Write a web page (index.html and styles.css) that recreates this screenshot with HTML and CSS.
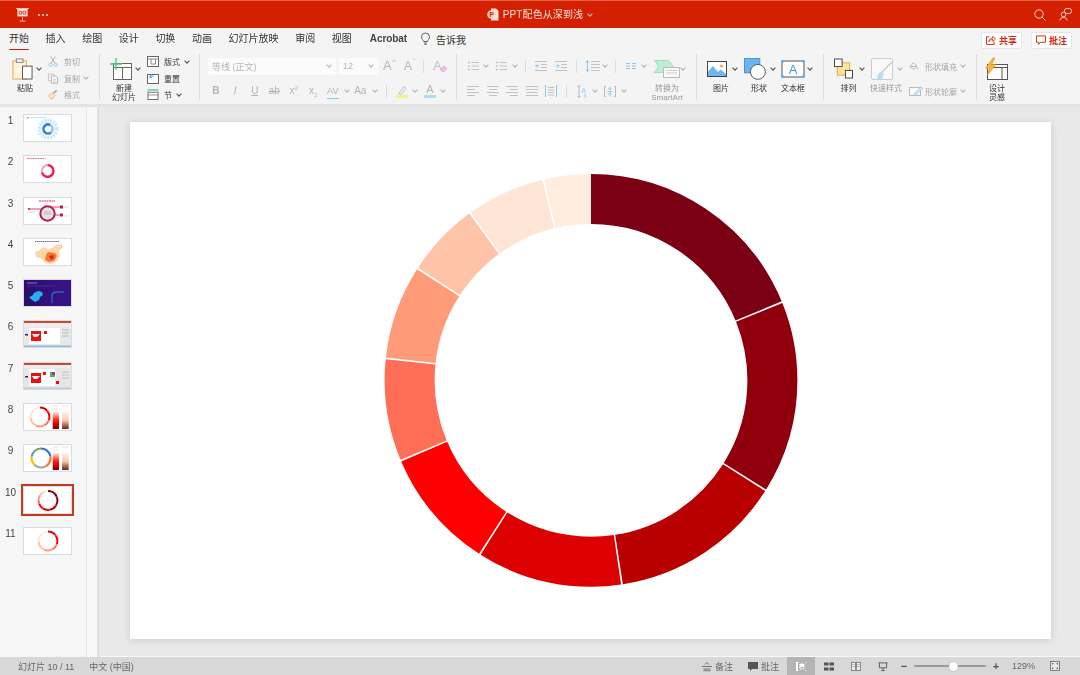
FILE: index.html
```html
<!DOCTYPE html>
<html lang="zh-CN">
<head>
<meta charset="utf-8">
<title>PPT配色从深到浅</title>
<link rel="stylesheet" href="styles.css">
</head>
<body>
<svg class="defs" aria-hidden="true">
  <defs>
    <symbol id="chev" viewBox="0 0 6 4"><path d="M.6.6 3 3.2 5.4.6" fill="none" stroke="currentColor" stroke-width="1.1"/></symbol>
    <g id="ring">
      <circle class="seg s1" r="181.4" pathLength="360" stroke-dasharray="67.5 360" stroke-dashoffset="0" transform="rotate(-90)"/>
      <circle class="seg s2" r="181.4" pathLength="360" stroke-dasharray="53.95 360" stroke-dashoffset="-68" transform="rotate(-90)"/>
      <circle class="seg s3" r="181.4" pathLength="360" stroke-dasharray="48.65 360" stroke-dashoffset="-122.45" transform="rotate(-90)"/>
      <circle class="seg s4" r="181.4" pathLength="360" stroke-dasharray="40.75 360" stroke-dashoffset="-171.6" transform="rotate(-90)"/>
      <circle class="seg s5" r="181.4" pathLength="360" stroke-dasharray="34 360" stroke-dashoffset="-212.85" transform="rotate(-90)"/>
      <circle class="seg s6" r="181.4" pathLength="360" stroke-dasharray="28.5 360" stroke-dashoffset="-247.35" transform="rotate(-90)"/>
      <circle class="seg s7" r="181.4" pathLength="360" stroke-dasharray="26.2 360" stroke-dashoffset="-276.35" transform="rotate(-90)"/>
      <circle class="seg s8" r="181.4" pathLength="360" stroke-dasharray="20.8 360" stroke-dashoffset="-303.05" transform="rotate(-90)"/>
      <circle class="seg s9" r="181.4" pathLength="360" stroke-dasharray="22 360" stroke-dashoffset="-324.35" transform="rotate(-90)"/>
      <circle class="seg s10" r="181.4" pathLength="360" stroke-dasharray="13.15 360" stroke-dashoffset="-346.85" transform="rotate(-90)"/>
    </g>
    <g id="ringlight">
      <circle class="seg s4" r="181.4" pathLength="360" stroke-dasharray="50 360" stroke-dashoffset="0" transform="rotate(-90)"/>
      <circle class="seg s5" r="181.4" pathLength="360" stroke-dasharray="60 360" stroke-dashoffset="-51" transform="rotate(-90)"/>
      <circle class="seg s6" r="181.4" pathLength="360" stroke-dasharray="40 360" stroke-dashoffset="-112" transform="rotate(-90)"/>
      <circle class="seg s7" r="181.4" pathLength="360" stroke-dasharray="50 360" stroke-dashoffset="-153" transform="rotate(-90)"/>
      <circle class="seg s8" r="181.4" pathLength="360" stroke-dasharray="60 360" stroke-dashoffset="-204" transform="rotate(-90)"/>
      <circle class="seg s9" r="181.4" pathLength="360" stroke-dasharray="50 360" stroke-dashoffset="-265" transform="rotate(-90)"/>
      <circle class="seg s10" r="181.4" pathLength="360" stroke-dasharray="44 360" stroke-dashoffset="-316" transform="rotate(-90)"/>
    </g>
    <linearGradient id="barA" x1="0" y1="0" x2="0" y2="1"><stop offset="0" stop-color="#ffe9dd"/><stop offset=".45" stop-color="#ff2a1a"/><stop offset=".7" stop-color="#d80000"/><stop offset="1" stop-color="#70000f"/></linearGradient>
    <linearGradient id="barB" x1="0" y1="0" x2="0" y2="1"><stop offset="0" stop-color="#fff3ea"/><stop offset=".5" stop-color="#f8c8a8"/><stop offset=".8" stop-color="#a8604a"/><stop offset="1" stop-color="#5e2a1e"/></linearGradient>
    <symbol id="list" viewBox="0 0 12 12"><path d="M1 2.5h1.6M1 6h1.6M1 9.500h1.600" stroke="#8dc6ec" stroke-width="1.600"/><path d="M4.500 2.500H12M4.500 6H12M4.500 9.500H12" stroke="#c2c2c2"/></symbol>
    <symbol id="indl" viewBox="0 0 12 12"><path d="M0 1.500h12M6 4.500h6M6 7.500h6M0 10.500h12" stroke="#c2c2c2"/><path d="M4.500 6H.8M2.500 4.300.8 6l1.700 1.700" fill="none" stroke="#8dc6ec"/></symbol>
    <symbol id="indr" viewBox="0 0 12 12"><path d="M0 1.500h12M6 4.500h6M6 7.500h6M0 10.500h12" stroke="#c2c2c2"/><path d="M.5 6h3.700M2.500 4.300 4.200 6 2.500 7.700" fill="none" stroke="#8dc6ec"/></symbol>
    <symbol id="al" viewBox="0 0 12 10"><path d="M0 .5h12M0 3.500h8M0 6.500h12M0 9.500h8" stroke="#c2c2c2"/></symbol>
    <symbol id="ac" viewBox="0 0 12 10"><path d="M0 .5h12M2 3.500h8M0 6.500h12M2 9.500h8" stroke="#c2c2c2"/></symbol>
    <symbol id="ar" viewBox="0 0 12 10"><path d="M0 .5h12M4 3.500h8M0 6.500h12M4 9.500h8" stroke="#c2c2c2"/></symbol>
    <symbol id="aj" viewBox="0 0 12 10"><path d="M0 .5h12M0 3.500h12M0 6.500h12M0 9.500h12" stroke="#c2c2c2"/></symbol>
  </defs>
</svg>

<div class="app">
  <header class="titlebar soft">
    <div class="tb-left">
      <svg class="i-logo" viewBox="0 0 14 15"><path d="M0 .5h14M7 10v3.500M4 14h6" stroke="#f6c9bd" fill="none"/><rect x="1.500" y="1" width="11" height="8" fill="#fbe3dc"/><path d="M3.500 3.500h2.500v3h-2.500zM7.500 3.500h3v3h-3z" fill="none" stroke="#d22000" stroke-width=".8"/></svg>
      <div class="dots"><i></i><i></i><i></i></div>
    </div>
    <div class="tb-title">
      <svg class="i-file" viewBox="0 0 12 13"><path d="M4 .5h5l2.500 2.500v9a.6.6 0 0 1-.6.6H4z" fill="#fbe3dc"/><circle cx="4.500" cy="6.500" r="4.300" fill="#f8d2c6"/><text x="2.300" y="9.200" class="file-p">P</text></svg>
      <span class="doc-name">PPT配色从深到浅</span>
      <svg class="cv title-cv"><use href="#chev"/></svg>
    </div>
    <div class="tb-right">
      <svg class="i-search" viewBox="0 0 12 12"><circle cx="5" cy="5" r="4.200" fill="none" stroke="#f8d4ca"/><path d="M8 8l3.500 3.500" stroke="#f8d4ca"/></svg>
      <svg class="i-person" viewBox="0 0 13 13"><circle cx="4.500" cy="6.500" r="2.300" fill="none" stroke="#f8d4ca"/><path d="M1 12.500c0-4 7-4 7 0" fill="none" stroke="#f8d4ca"/><rect x="5.500" y=".5" width="7" height="5" rx="2.200" fill="#d22000" stroke="#f8d4ca"/></svg>
    </div>
  </header>

  <nav class="tabs soft">
    <span class="tab active">开始</span>
    <span class="tab">插入</span>
    <span class="tab">绘图</span>
    <span class="tab">设计</span>
    <span class="tab">切换</span>
    <span class="tab">动画</span>
    <span class="tab">幻灯片放映</span>
    <span class="tab">审阅</span>
    <span class="tab">视图</span>
    <span class="tab tab-en">Acrobat</span>
    <span class="tell">
      <svg class="i-bulb" viewBox="0 0 9 12"><path d="M2.600 8.500C2.300 7 .5 6.200.5 4a4 4 0 0 1 8 0c0 2.200-1.800 3-2.100 4.500zM3 10h3M3.500 11.500h2" fill="none" stroke="#555" stroke-width=".9"/></svg>
      告诉我
    </span>
    <div class="tab-actions">
      <span class="act-btn">
        <svg class="i-act" viewBox="0 0 11 11"><path d="M3.500 2H.5v8.500h8.500V7.500" fill="none" stroke="#d22000"/><path d="M3 7.500C3.300 5 5 3.500 7.500 3.500V1.500L10.500 4.500 7.500 7V5C5.500 5 4 6 3 7.500z" fill="none" stroke="#d22000" stroke-width=".9"/></svg>
        共享
      </span>
      <span class="act-btn">
        <svg class="i-act" viewBox="0 0 11 11"><path d="M.5 1h10v7H5l-2 2.300V8H.5z" fill="none" stroke="#d22000"/></svg>
        批注
      </span>
    </div>
  </nav>

  <section class="ribbon soft">
    <div class="group g1">
      <div class="big w26">
        <div class="big-top">
          <svg class="i-paste" viewBox="0 0 22 23"><rect x="1" y="3" width="14" height="19" fill="#fff4df" stroke="#f0a23c"/><rect x="4.500" y="1" width="7" height="3.500" fill="#fff" stroke="#777"/><rect x="11" y="8.500" width="10" height="13.500" fill="#fff" stroke="#555"/></svg>
          <svg class="cv dark ml3"><use href="#chev"/></svg>
        </div>
        <div class="lbl">粘贴</div>
      </div>
      <div class="stack ml10">
        <div class="srow off">
          <span class="si"><svg class="i-s" viewBox="0 0 10 12"><path d="M2.500.5 7 8M7.500.5 3 8" stroke="#aaa" fill="none"/><circle cx="2.300" cy="9.500" r="1.700" fill="none" stroke="#8dc6ec"/><circle cx="7.700" cy="9.500" r="1.700" fill="none" stroke="#8dc6ec"/></svg></span>剪切
        </div>
        <div class="srow off">
          <span class="si"><svg class="i-s" viewBox="0 0 12 12"><path d="M3.500 8.500H.5V.5h5.500l1.500 2" fill="none" stroke="#bbb"/><path d="M4 3h5.500l2 2v6.500H4z" fill="#f8f8f8" stroke="#aaa"/><path d="M6 7h3.500M6 9h3.500" stroke="#bbb" stroke-width=".8"/></svg></span>复制
          <svg class="cv ml3"><use href="#chev"/></svg>
        </div>
        <div class="srow off">
          <span class="si"><svg class="i-s" viewBox="0 0 12 12"><path d="M.5 7 5 3.500 8.500 7 5 11.500C3 11.500 1 9.500.5 7z" fill="#fbe4c4" stroke="#e6b98a"/><path d="M6.500 4.500 10.500 1" stroke="#aaa" stroke-width="2"/></svg></span>格式
        </div>
      </div>
    </div>

    <div class="group g2">
      <div class="big w28">
        <div class="big-top">
          <svg class="i-new" viewBox="0 0 22 22"><rect x="3.500" y="5.500" width="18" height="16" fill="#fff" stroke="#666"/><path d="M3.500 9.500h18M12.500 9.500v12" stroke="#666"/><path d="M6 0v12M0 6h12" stroke="#3ed07c" stroke-width="1.300"/></svg>
          <svg class="cv dark ml3"><use href="#chev"/></svg>
        </div>
        <div class="lbl">新建<br>幻灯片</div>
      </div>
      <div class="stack ml9">
        <div class="srow on">
          <span class="si si17"><svg class="i-s12" viewBox="0 0 12 11"><rect x=".5" y=".5" width="11" height="10" fill="#fff" stroke="#666"/><path d="M.5 3h11M4 3v5h4.500V3" fill="none" stroke="#888"/></svg></span>版式
          <svg class="cv dark ml4"><use href="#chev"/></svg>
        </div>
        <div class="srow on">
          <span class="si si17"><svg class="i-s12" viewBox="0 0 12 11"><rect x=".5" y="1.500" width="11" height="9" fill="#fff" stroke="#666"/><path d="M3 5.500V3h3.500M3 3l1.700-2M3 3l1.700 2" fill="none" stroke="#3d9be9"/></svg></span>重置
        </div>
        <div class="srow on">
          <span class="si si17"><svg class="i-s12" viewBox="0 0 12 12"><rect x=".5" y="3.500" width="11" height="8" fill="#fff" stroke="#666"/><path d="M0 1h12" stroke="#4fd08a" stroke-width="1.500"/><path d="M.5 6.500h11" stroke="#888"/></svg></span>节
          <svg class="cv dark ml4"><use href="#chev"/></svg>
        </div>
      </div>
    </div>

    <div class="group g3">
      <div class="col">
        <div class="row first pl8">
          <div class="select w128"><span>等线 (正文)</span><svg class="cv"><use href="#chev"/></svg></div>
          <div class="select w39 ml3"><span>12</span><svg class="cv"><use href="#chev"/></svg></div>
          <span class="txt-ic sz14 ml5">A<sup>^</sup></span>
          <span class="txt-ic sz12 ml7">A<sup>ˇ</sup></span>
          <i class="sep ml7"></i>
          <span class="txt-ic sz14 ml9 clear">A<svg class="i-eraser" viewBox="0 0 8 7"><path d="M.5 4.500 4 1l3 2.500L3.800 6.500H2z" fill="#f3bfe2" stroke="#e79ad0" stroke-width=".7"/></svg></span>
        </div>
        <div class="row pl6">
          <span class="fbtn b">B</span>
          <span class="fbtn it">I</span>
          <span class="fbtn un">U</span>
          <span class="fbtn st">ab</span>
          <span class="fbtn">x<sup class="blue-s">2</sup></span>
          <span class="fbtn">x<sub class="blue-s">2</sub></span>
          <span class="fbtn av">AV<i class="av-line"></i></span>
          <svg class="cv ml1"><use href="#chev"/></svg>
          <span class="fbtn ml1">Aa</span>
          <svg class="cv ml2"><use href="#chev"/></svg>
          <i class="sep ml8"></i>
          <svg class="i-high ml9" viewBox="0 0 12 13"><path d="M3 8 8 1.500l2 1.500-4.500 6H3z" fill="none" stroke="#c2c2c2"/><rect y="10" width="12" height="3" fill="#f8f08c"/></svg>
          <svg class="cv ml4"><use href="#chev"/></svg>
          <span class="fcolor ml6">A</span>
          <svg class="cv ml4"><use href="#chev"/></svg>
        </div>
      </div>
    </div>

    <div class="group g4">
      <div class="col">
        <div class="row first pl10">
          <svg class="i12"><use href="#list"/></svg>
          <svg class="cv ml4"><use href="#chev"/></svg>
          <svg class="i12 ml6"><use href="#list"/></svg>
          <svg class="cv ml5"><use href="#chev"/></svg>
          <i class="sep ml7"></i>
          <svg class="i12 ml9"><use href="#indl"/></svg>
          <svg class="i12 ml8"><use href="#indr"/></svg>
          <i class="sep ml9"></i>
          <svg class="i-spacing ml8" viewBox="0 0 15 12"><path d="M2.500.5v11M.8 2.500 2.500.5l1.700 2M.8 9.500l1.700 2 1.700-2" fill="none" stroke="#8dc6ec"/><path d="M6 1.500h9M6 4.500h9M6 7.500h9M6 10.500h9" stroke="#c2c2c2"/></svg>
          <svg class="cv ml2"><use href="#chev"/></svg>
          <i class="sep ml7"></i>
          <svg class="i-cols ml10" viewBox="0 0 10 6"><path d="M0 .5h4M6 .5h4M0 3h4M6 3h4M0 5.500h4M6 5.500h4" stroke="#8dc6ec"/></svg>
          <svg class="cv ml5"><use href="#chev"/></svg>
        </div>
        <div class="row pl10">
          <svg class="i12h"><use href="#al"/></svg>
          <svg class="i12h ml8"><use href="#ac"/></svg>
          <svg class="i12h ml7"><use href="#ar"/></svg>
          <svg class="i12h ml8"><use href="#aj"/></svg>
          <svg class="i-dist ml7" viewBox="0 0 12 12"><path d="M.5 0v12M11.500 0v12" stroke="#8dc6ec"/><path d="M3 2.500h6M3 5h6M3 7.500h6M3 10h6" stroke="#c2c2c2"/></svg>
          <i class="sep ml9"></i>
          <svg class="i-vtxt ml10" viewBox="0 0 12 13"><path d="M2 .5v12M.5 2 2 .5 3.500 2M.5 11 2 12.500 3.500 11" fill="none" stroke="#bbb"/><text x="4.500" y="7.500" class="vt">A</text><path d="M8 8.500v4" stroke="#8dc6ec"/></svg>
          <svg class="cv ml3"><use href="#chev"/></svg>
          <svg class="i-valign ml6" viewBox="0 0 12 11"><path d="M2 .5H.5v10H2M10 .5h1.500v10H10" fill="none" stroke="#bbb"/><path d="M6 .5v3M6 7.500v3M4.500 2.500 6 4l1.500-1.500M4.500 8.500 6 7l1.500 1.500" fill="none" stroke="#8dc6ec"/><path d="M3.500 5.500h5" stroke="#bbb"/></svg>
          <svg class="cv ml5"><use href="#chev"/></svg>
        </div>
      </div>
      <div class="big w30 off-lbl ml5">
        <div class="big-top pl2">
          <svg class="i-smart" viewBox="0 0 26 18"><path d="M.5.5h14l5 6-5 6H.5l4-6z" fill="#bdeed3" stroke="#9fdfc0"/><rect x="9.500" y="7.500" width="16" height="10" fill="#fafafa" stroke="#bbb"/><path d="M12 10.500h11M12 13h11" stroke="#ccc"/></svg>
          <svg class="cv"><use href="#chev"/></svg>
        </div>
        <div class="lbl">转换为<br>SmartArt</div>
      </div>
    </div>

    <div class="group g5">
      <div class="big w28">
        <div class="big-top">
          <svg class="i-pic" viewBox="0 0 20 16"><rect x=".5" y=".5" width="19" height="15" fill="#fff" stroke="#444"/><path d="M1 15V10.500L6 5l5 6 2.500-2.500L19 13v2z" fill="#6db6f0"/><circle cx="14.500" cy="5" r="1.500" fill="#f5a25b"/></svg>
          <svg class="cv dark ml5"><use href="#chev"/></svg>
        </div>
        <div class="lbl">图片</div>
      </div>
      <div class="big w28 ml10">
        <div class="big-top">
          <svg class="i-shape" viewBox="0 0 23 23"><rect x=".5" y=".5" width="16" height="15" fill="#6db3f2" stroke="#4b90d6"/><circle cx="14.500" cy="14.500" r="7.800" fill="#fff" stroke="#555"/></svg>
          <svg class="cv dark ml4"><use href="#chev"/></svg>
        </div>
        <div class="lbl">形状</div>
      </div>
      <div class="big w24 ml8">
        <div class="big-top">
          <svg class="i-box" viewBox="0 0 24 18"><rect x="1" y="1" width="22" height="16" fill="#fff" stroke="#555"/><g fill="#5aaef0"><circle cx="1.500" cy="1.500" r="1.400"/><circle cx="22.500" cy="1.500" r="1.400"/><circle cx="1.500" cy="16.500" r="1.400"/><circle cx="22.500" cy="16.500" r="1.400"/></g><text x="12" y="14" class="box-a">A</text></svg>
          <svg class="cv dark ml2"><use href="#chev"/></svg>
        </div>
        <div class="lbl">文本框</div>
      </div>
    </div>

    <div class="group g6">
      <div class="big w29">
        <div class="big-top">
          <svg class="i-arr" viewBox="0 0 20 21"><rect x="3.500" y="4.500" width="13" height="13" fill="#fee39b" stroke="#f0a23c"/><rect x=".5" y=".5" width="8" height="8" fill="#fff" stroke="#444"/><rect x="12" y="12.500" width="7.500" height="8" fill="#fff" stroke="#444"/></svg>
          <svg class="cv dark ml6"><use href="#chev"/></svg>
        </div>
        <div class="lbl">排列</div>
      </div>
      <div class="big w46 off-lbl">
        <div class="big-top pl8">
          <svg class="i-quick" viewBox="0 0 22 22"><rect x=".5" y=".5" width="21" height="21" rx="1.500" fill="#f9f9f9" stroke="#ccc"/><path d="M21 4 11 14" stroke="#ccc" stroke-width="1.500"/><path d="M6 21c0-5 3-8 6-7 1 1 .5 4-1 7z" fill="#bcdcf2"/></svg>
          <svg class="cv ml4"><use href="#chev"/></svg>
        </div>
        <div class="lbl">快速样式</div>
      </div>
      <div class="col">
        <div class="row first shape-row off">
          <span class="si"><svg class="i-s" viewBox="0 0 12 11"><path d="M1 5.500 5.500 1l4 4-3.500 4z" fill="#fafafa" stroke="#aaa"/><path d="M2 5.500h7" stroke="#aaa"/><path d="M10.500 7v2" stroke="#8dc6ec" stroke-width="1.300"/></svg></span>形状填充
          <svg class="cv ml3"><use href="#chev"/></svg>
        </div>
        <div class="row shape-row off">
          <span class="si shift"><svg class="i-s15" viewBox="0 0 14 10"><rect x=".5" y="1.500" width="11" height="8" fill="#fafafa" stroke="#bbb"/><path d="M5 8 12 1l1.500 1.500-7 6.500z" fill="#d5eaf8" stroke="#8dc6ec" stroke-width=".8"/></svg></span>形状轮廓
          <svg class="cv ml3"><use href="#chev"/></svg>
        </div>
      </div>
    </div>

    <div class="group g7">
      <div class="big w24">
        <div class="big-top">
          <svg class="i-design" viewBox="0 0 23 22"><rect x="2.500" y="6.500" width="20" height="15" fill="#fff" stroke="#555"/><path d="M2.500 9.500h20M17 9.500v12" stroke="#555"/><path d="M8 0 .5 10h4L2.500 17 11 6.500H6.500L10 0z" fill="#f9b13f" stroke="#ef8f20" stroke-width=".6"/></svg>
        </div>
        <div class="lbl">设计<br>灵感</div>
      </div>
    </div>
  </section>
  <div class="ribbon-edge"></div>

  <main class="workspace">
    <aside class="slides">
      <div class="slide-item"><span class="num">1</span>
        <svg class="thumb" viewBox="0 0 47 26"><rect width="47" height="26" fill="#fff"/><path d="M3 2h1.500v1.500H3z" fill="#39b4e8"/><path d="M5.500 2.700H22" stroke="#a8d8f2" stroke-width=".8"/><circle cx="24" cy="14" r="8.500" fill="none" stroke="#cfe6f8" stroke-width="4" stroke-dasharray="2 1"/><circle cx="24" cy="14" r="4.500" fill="none" stroke="#2d83dc" stroke-width="2.600" stroke-dasharray="20 9" transform="rotate(40 24 14)"/><circle cx="24" cy="14" r="4.500" fill="none" stroke="#8ec4f2" stroke-width="2.600" stroke-dasharray="9 20" transform="rotate(-60 24 14)"/></svg></div>
      <div class="slide-item"><span class="num">2</span>
        <svg class="thumb" viewBox="0 0 47 26"><rect width="47" height="26" fill="#fff"/><path d="M3 2.500h19" stroke="#e8557a" stroke-width=".8" stroke-dasharray="2 .6"/><circle cx="23.700" cy="15" r="5.800" fill="none" stroke="#f4a9bf" stroke-width="2.200"/><circle cx="23.700" cy="15" r="5.800" fill="none" stroke="#f01a4d" stroke-width="2.200" stroke-dasharray="25 12" transform="rotate(-90 23.700 15)"/></svg></div>
      <div class="slide-item"><span class="num">3</span>
        <svg class="thumb" viewBox="0 0 47 26"><rect width="47" height="26" fill="#fff"/><path d="M15 3h16" stroke="#d8336a" stroke-width="1" stroke-dasharray="2 .5"/><path d="M5 11h12M28 9h9M28 17h9" stroke="#c01a50" stroke-width=".8"/><circle cx="5" cy="11" r="1" fill="#c01a50"/><path d="M36 7.500h3v3h-3zM36 15.500h3v3h-3z" fill="#c01a50"/><path d="M3 14h8M40 9h5M40 18h5" stroke="#ccc" stroke-width=".7"/><circle cx="23.500" cy="15.500" r="7.200" fill="#e4e4e4" stroke="#b9174a" stroke-width="2"/><path d="M20 14h7M20 16h7" stroke="#999" stroke-width=".6"/></svg></div>
      <div class="slide-item"><span class="num">4</span>
        <svg class="thumb" viewBox="0 0 47 26"><rect width="47" height="26" fill="#fff"/><path d="M11 2.500h24" stroke="#666" stroke-width=".9" stroke-dasharray="1.500 .4"/><path d="M11 13l5-2 3-3 5 2 4-1 4-3 5-1 2 3-3 3-1 3 1 3-4 6-6 2-5-1-3-4-6-2z" fill="#fcd6a8"/><path d="M24 13l7 1 2 3-3 5-5 1-4-2 1-5z" fill="#f4782e"/><path d="M25 17l4-1 1 3-3 2z" fill="#d42814"/></svg></div>
      <div class="slide-item"><span class="num">5</span>
        <svg class="thumb" viewBox="0 0 47 26"><defs><linearGradient id="pp" x1="0" x2="1"><stop offset="0" stop-color="#2a0e6c"/><stop offset="1" stop-color="#3a1488"/></linearGradient></defs><rect width="47" height="26" fill="url(#pp)"/><path d="M3 3h10" stroke="#8e7fd0" stroke-width=".9"/><path d="M3 6h28" stroke="#5a48a0" stroke-width=".5"/><path d="M5 17l3-1 2-3 4-2 4 1 1 3-3 2-1 3-4 2-3-2z" fill="#25b2f2"/><path d="M28 23v-8q1-3 4-3h8" fill="none" stroke="#2a66c8" stroke-width="1.300"/></svg></div>
      <div class="slide-item"><span class="num">6</span>
        <svg class="thumb" viewBox="0 0 47 26"><rect width="47" height="26" fill="#e8e8e8"/><rect width="47" height="2" fill="#c9492e"/><rect y="2" width="47" height="4" fill="#eee"/><rect x="5" y="7" width="31" height="16" fill="#fff"/><rect x="7" y="10" width="10" height="10" fill="#ee1010"/><path d="M8 13h8l-3 3H10z" fill="#fff"/><rect x="20" y="10" width="3" height="3" fill="#ee1010"/><rect x="1" y="13" width="3" height="1.500" fill="#33207a"/><path d="M38 9h7M38 12h7M38 15h7" stroke="#bbb"/><rect y="24.500" width="47" height="1.500" fill="#8cc0d8"/></svg></div>
      <div class="slide-item"><span class="num">7</span>
        <svg class="thumb" viewBox="0 0 47 26"><rect width="47" height="26" fill="#e6e6e6"/><rect width="47" height="2" fill="#c9492e"/><rect y="2" width="47" height="3" fill="#eee"/><rect x="5" y="6" width="26" height="17" fill="#fff"/><rect x="7" y="10" width="10" height="10" fill="#ee1010"/><path d="M8 13h8l-3 3H10z" fill="#fff"/><rect x="19" y="9" width="3" height="3" fill="#ee1010"/><rect x="1" y="13" width="3" height="1.500" fill="#33207a"/><rect x="25" y="8" width="7" height="7" fill="#fff"/><rect x="26" y="9" width="5" height="5" fill="#5fae4a"/><rect x="28" y="9" width="3" height="3" fill="#a030c0"/><rect x="32" y="18" width="3" height="3" fill="#ee1010"/><path d="M38 9h7M38 12h7M38 15h7" stroke="#c4c4c4"/><rect y="24.500" width="47" height="1.500" fill="#bcd"/></svg></div>
      <div class="slide-item"><span class="num">8</span>
        <svg class="thumb" viewBox="0 0 47 26"><rect width="47" height="26" fill="#fff"/><use href="#ringlight" transform="translate(16 13) scale(.052)"/><path d="M29 2h6M38 2h6M29 5h5" stroke="#ddd" stroke-width=".8"/><rect x="28.700" y="8" width="6.300" height="17" fill="url(#barA)"/><rect x="38" y="8" width="6.700" height="17" fill="url(#barB)"/></svg></div>
      <div class="slide-item"><span class="num">9</span>
        <svg class="thumb" viewBox="0 0 47 26"><rect width="47" height="26" fill="#fff"/><g fill="none" stroke-width="2.200" transform="rotate(-90 17 13)"><circle cx="17" cy="13" r="9.500" stroke="#4272c4" stroke-dasharray="13 60"/><circle cx="17" cy="13" r="9.500" stroke="#ed7d31" stroke-dasharray="12 60" stroke-dashoffset="-13"/><circle cx="17" cy="13" r="9.500" stroke="#a5a5a5" stroke-dasharray="12 60" stroke-dashoffset="-25"/><circle cx="17" cy="13" r="9.500" stroke="#ffc000" stroke-dasharray="9 60" stroke-dashoffset="-37"/><circle cx="17" cy="13" r="9.500" stroke="#5b9bd5" stroke-dasharray="6 60" stroke-dashoffset="-46"/><circle cx="17" cy="13" r="9.500" stroke="#70ad47" stroke-dasharray="8 60" stroke-dashoffset="-52"/></g><path d="M29 2h6M38 2h6M29 5h5" stroke="#ddd" stroke-width=".8"/><rect x="28.700" y="8" width="6.300" height="17" fill="url(#barA)"/><rect x="38" y="8" width="6.700" height="17" fill="url(#barB)"/></svg></div>
      <div class="slide-item current"><span class="num">10</span>
        <svg class="thumb" viewBox="0 0 47 26"><rect width="47" height="26" fill="#fff"/><use href="#ring" transform="translate(24 13.500) scale(.052)"/></svg></div>
      <div class="slide-item"><span class="num">11</span>
        <svg class="thumb" viewBox="0 0 47 26"><rect width="47" height="26" fill="#fff"/><use href="#ringlight" transform="translate(24 13) scale(.052)"/></svg></div>
    </aside>
    <div class="scroll-strip"></div>
    <div class="canvas">
      <div class="slide">
        <svg class="slide-art" viewBox="0 0 921 517"><use href="#ring" transform="translate(461 258.300)"/></svg>
      </div>
    </div>
  </main>

  <footer class="status soft">
    <span>幻灯片 10 / 11</span>
    <span class="lang">中文 (中国)</span>
    <div class="st-right">
      <svg class="st-ic" viewBox="0 0 10 9"><path d="M0 4.500h10M1.500 7h7M1.500 8.700h7M3 2.500 5 .5l2 2" fill="none" stroke="#666" stroke-width=".9"/></svg>
      <span class="st-lbl">备注</span>
      <svg class="st-ic ml15" viewBox="0 0 10 9"><path d="M0 0h10v7H4L2 9V7H0z" fill="#555"/></svg>
      <span class="st-lbl">批注</span>
      <span class="view active ml8"><svg class="st-ic" viewBox="0 0 11 10"><rect x=".5" y=".5" width="10" height="9" fill="#fff" stroke="#fff"/><path d="M3 1v8M3 1h7v8H3" fill="none" stroke="#777"/><path d="M5 6.500h3.500" stroke="#777"/></svg></span>
      <span class="view"><svg class="st-ic" viewBox="0 0 11 9"><path d="M0 0h5v3.500H0zM6 0h5v3.500H6zM0 5.500h5V9H0zM6 5.500h5V9H6z" fill="#555"/></svg></span>
      <span class="view"><svg class="st-ic" viewBox="0 0 11 10"><path d="M.5.500h4.500v9H.5zM6 .5h4.500v9H6z" fill="#eee" stroke="#666" stroke-width=".8"/><path d="M1.500 3H4M1.500 5H4M7 3h2.500M7 5h2.500" stroke="#888" stroke-width=".7"/></svg></span>
      <span class="view"><svg class="st-ic" viewBox="0 0 11 10"><path d="M.5 1h10M1.500 1v5.500h8V1M5.500 6.500V9M3.500 9.500h4" fill="none" stroke="#555"/></svg></span>
      <span class="zoom-minus">−</span>
      <div class="zoom-track"><i class="zoom-knob"></i></div>
      <span class="zoom-plus">+</span>
      <span class="zoom-val">129%</span>
      <svg class="st-fit" viewBox="0 0 10 10"><rect x=".5" y=".5" width="9" height="9" fill="#e8e8e8" stroke="#666" stroke-width=".8"/><path d="M2 2h2L2 4zM8 2H6l2 2zM2 8h2L2 6zM8 8H6l2-2z" fill="#666"/></svg>
    </div>
  </footer>
</div>
</body>
</html>
```

FILE: styles.css
```css
* { box-sizing: border-box; }
html, body { margin: 0; padding: 0; }
body {
  width: 1080px; height: 675px; overflow: hidden;
  font-family: "Liberation Sans", "Noto Sans CJK SC", sans-serif;
  color: #333;
}
.defs { position: absolute; width: 0; height: 0; }
.app { display: flex; flex-direction: column; height: 675px; background: #f4f4f4; }
svg { display: block; flex: none; overflow: visible; }
.soft { filter: blur(.35px); }

/* donut colours */
.seg { fill: none; stroke-width: var(--ring, 50); }
.s1 { stroke: #7c0013; } .s2 { stroke: #90000c; } .s3 { stroke: #b80000; } .s4 { stroke: #dc0000; } .s5 { stroke: #ff0000; }
.s6 { stroke: #ff6e56; } .s7 { stroke: #ff9b78; } .s8 { stroke: #ffc4a8; } .s9 { stroke: #ffe5d5; } .s10 { stroke: #ffeee0; }

/* spacing helpers */
.ml1 { margin-left: 1px; } .ml2 { margin-left: 2px; } .ml3 { margin-left: 3px; } .ml4 { margin-left: 4px; }
.ml5 { margin-left: 5px; } .ml6 { margin-left: 6px; } .ml7 { margin-left: 7px; } .ml8 { margin-left: 8px; }
.ml9 { margin-left: 9px; } .ml10 { margin-left: 10px; } .ml15 { margin-left: 15px; }
.pl2 { padding-left: 2px; } .pl6 { padding-left: 6px; } .pl8 { padding-left: 8px; } .pl10 { padding-left: 10px; }

/* title bar */
.titlebar {
  height: 28px; flex: none; display: grid; grid-template-columns: 1fr auto 1fr; align-items: center;
  background: #d22000; border-top: 1px solid #e2604a; color: #f8d4ca;
}
.tb-left { display: flex; align-items: center; padding-left: 16px; }
.i-logo { width: 13px; height: 14px; }
.dots { display: flex; gap: 2px; margin-left: 9px; }
.dots i { width: 2px; height: 2px; border-radius: 50%; background: #fbe3dc; }
.tb-title { display: flex; align-items: center; }
.i-file { width: 12px; height: 13px; }
.file-p { font: bold 7px "Liberation Sans", sans-serif; fill: #d22000; }
.doc-name { margin-left: 4px; font-size: 10px; letter-spacing: .1px; line-height: 14px; color: #fbe0d8; }
.title-cv { margin-left: 4px; color: #e8806c; }
.tb-right { display: flex; align-items: center; justify-content: flex-end; padding-right: 8px; }
.i-search { width: 12px; height: 12px; }
.i-person { width: 13px; height: 13px; margin-left: 13px; }

.cv { width: 6px; height: 4px; color: #b5b5b5; }
.cv.dark { color: #555; }

/* tabs */
.tabs { height: 22px; flex: none; display: flex; align-items: center; padding-left: 9px; gap: 16.6px; font-size: 10px; background: #f4f4f4; }
.tab { position: relative; line-height: 14px; }
.tab.active::after { content: ""; position: absolute; left: 0; right: 0; top: 17px; height: 2px; background: #d22000; border-radius: 1px; }
.tab-en { font-weight: 700; color: #444; font-size: 10px; margin-left: 1.500px; letter-spacing: -.1px; }
.tell { display: flex; align-items: center; margin-left: -2.500px; gap: 6px; font-weight: 400; }
.i-bulb { width: 9px; height: 12px; }
.tab-actions { margin-left: auto; display: flex; gap: 9px; padding-right: 8px; margin-top: 2px; }
.act-btn {
  width: 41px; height: 17px; display: flex; align-items: center; justify-content: center; gap: 3px;
  background: #fff; border: 1px solid #e6e6e6; border-radius: 2px; color: #cf2a0e; font-size: 9px; font-weight: 700;
}
.i-act { width: 10px; height: 10px; }

/* ribbon */
.ribbon { height: 54px; flex: none; display: flex; align-items: flex-start; padding-top: 4px; background: #f4f4f4; }
.ribbon-edge { height: 3px; flex: none; background: #e3e3e3; }
.group { height: 46px; display: flex; align-items: flex-start; border-right: 1px solid #dcdcdc; flex: none; }
.g1 { width: 100px; padding-left: 12px; }
.g2 { width: 100px; padding-left: 10px; }
.g3 { width: 257px; }
.g4 { width: 240px; }
.g5 { width: 127px; padding-left: 10px; }
.g6 { width: 153px; padding-left: 10px; }
.g7 { border-right: 0; padding-left: 8px; }

.big { flex: none; }
.w24 { width: 24px; } .w26 { width: 26px; } .w28 { width: 28px; } .w29 { width: 29px; } .w30 { width: 30px; } .w46 { width: 46px; }
.big-top { height: 29.500px; display: flex; align-items: center; white-space: nowrap; }
.lbl { font-size: 8px; line-height: 9px; text-align: center; white-space: nowrap; color: #333; display: flex; flex-direction: column; align-items: center; }
.w30 .lbl, .w46 .lbl, .w24 .lbl, .w28 .lbl { margin: 0 -10px; }
.off-lbl .lbl { color: #9a9a9a; }

.i-paste { width: 21px; height: 22px; }
.i-new { width: 22px; height: 22px; }
.i-pic { width: 20px; height: 16px; }
.i-shape { width: 22px; height: 22px; margin-left: -1px; }
.i-box { width: 24px; height: 18px; }
.box-a { font: 13px "Liberation Sans", sans-serif; fill: #3d9be9; text-anchor: middle; }
.i-arr { width: 19px; height: 21px; }
.i-quick { width: 22px; height: 22px; }
.i-design { width: 23px; height: 22px; }
.i-smart { width: 26px; height: 18px; }

.stack { display: flex; flex-direction: column; margin-top: -.5px; }
.srow { height: 16.500px; display: flex; align-items: center; font-size: 8px; white-space: nowrap; }
.off { color: #a4a4a4; }
.on { color: #333; }
.si { width: 16px; display: flex; align-items: center; flex: none; }
.si17 { width: 17px; }
.i-s { width: 10px; height: 11px; }
.i-s12 { width: 12px; height: 11px; }
.i-s15 { width: 14px; height: 10px; }
.shift { width: 16px; }

.col { display: flex; flex-direction: column; }
.row { height: 20px; display: flex; align-items: center; white-space: nowrap; }
.row.first { margin-top: 2px; margin-bottom: 5px; }
.sep { width: 1px; height: 13px; background: #dcdcdc; flex: none; }

.select {
  height: 17px; display: flex; align-items: center; justify-content: space-between; padding: 0 4px;
  background: #fbfbfb; color: #b4b4b4; font-size: 9px; border-radius: 2px;
}
.w128 { width: 128px; } .w39 { width: 39px; }
.txt-ic { position: relative; color: #b4b4b4; font-size: 13px; line-height: 14px; display: block; }
.txt-ic sup { position: absolute; font-size: 8px; left: 9px; top: -1px; line-height: 8px; color: #b4b4b4; }
.sz14 { width: 14px; } .sz12 { width: 12px; font-size: 12px; }
.clear { color: #c2c2c2; }
.i-eraser { position: absolute; width: 8px; height: 7px; left: 7px; top: 6px; }

.fbtn { position: relative; width: 19.500px; text-align: center; font-size: 10px; color: #b4b4b4; flex: none; line-height: 14px; }
.fbtn.b { font-weight: 700; }
.fbtn.it { font-style: italic; }
.fbtn.un { text-decoration: underline; }
.fbtn.st { text-decoration: line-through; }
.fbtn sup, .fbtn sub { font-size: 6px; line-height: 0; }
.blue-s { color: #8dc6ec; }
.av { font-size: 9px; }
.av-line { position: absolute; left: 4px; right: 4px; bottom: -1px; height: 1px; background: #8dc6ec; }
.i-high { width: 12px; height: 13px; }
.fcolor { width: 12px; height: 14px; font-size: 11px; line-height: 11px; text-align: center; color: #b4b4b4; border-bottom: 3px solid #a8dcf2; flex: none; }

.i12 { width: 12px; height: 12px; }
.i12h { width: 12px; height: 10px; }
.i-spacing { width: 15px; height: 12px; }
.i-cols { width: 10px; height: 6px; }
.i-dist { width: 12px; height: 12px; }
.i-vtxt { width: 12px; height: 13px; }
.vt { font: 7px "Liberation Sans", sans-serif; fill: #9cc8e8; }
.i-valign { width: 12px; height: 11px; }
.shape-row { font-size: 8px; }

/* workspace */
.workspace { flex: 1; min-height: 0; display: flex; background: #e9e9e9; }
.slides { width: 87px; flex: none; padding-top: 8px; display: flex; flex-direction: column; gap: 15.300px; background: #f6f6f6; border-right: 1px solid #e8e8e8; }
.slide-item { height: 26px; display: flex; align-items: flex-start; flex: none; }
.num { width: 21px; margin-right: 3px; text-align: center; font-size: 10px; line-height: 12px; color: #444; filter: blur(.3px); }
.thumb { --ring: 38; width: 47px; height: 26px; box-shadow: 0 0 0 1px #dcdcdc; filter: blur(.45px); }
.current .thumb { outline: 2px solid #c23a20; outline-offset: 1px; box-shadow: 0 0 0 1px #ddd; filter: none; }
.scroll-strip { width: 13px; flex: none; background: #f8f8f8; border-right: 3px solid #e2e2e2; }
.canvas { flex: 1; padding: 15px 0 0 30px; box-shadow: inset 1px 0 0 #efefef; border-bottom: 1px solid #f8f8f8; }
.slide { width: 921px; height: 517px; background: #fff; box-shadow: 0 1px 8px rgba(0,0,0,.13); }
.slide-art { width: 921px; height: 517px; }

/* status bar */
.status { height: 18px; flex: none; display: flex; align-items: center; padding-left: 18px; background: #d8d8d8; font-size: 9px; color: #666; }
.lang { margin-left: 15px; }
.st-right { margin-left: auto; display: flex; align-items: center; height: 100%; }
.st-ic { width: 10px; height: 9px; }
.st-lbl { margin-left: 3px; width: 18px; white-space: nowrap; }
.view { width: 27px; height: 18px; display: flex; align-items: center; justify-content: center; flex: none; }
.view.active { width: 28px; background: #b4b4b4; }
.zoom-minus, .zoom-plus { font-size: 11px; line-height: 12px; color: #555; width: 8px; text-align: center; font-weight: 700; }
.zoom-minus { margin-left: 4px; }
.zoom-track { position: relative; width: 72px; height: 2px; margin-left: 6px; background: #9a9a9a; border-radius: 1px; }
.zoom-knob { position: absolute; left: 35px; top: -3.500px; width: 9px; height: 9px; border-radius: 50%; background: #fff; box-shadow: 0 0 1px #888; }
.zoom-plus { margin-left: 6px; }
.zoom-val { margin-left: 12px; width: 24px; }
.st-fit { width: 10px; height: 10px; margin: 0 20px 0 14px; }
```
